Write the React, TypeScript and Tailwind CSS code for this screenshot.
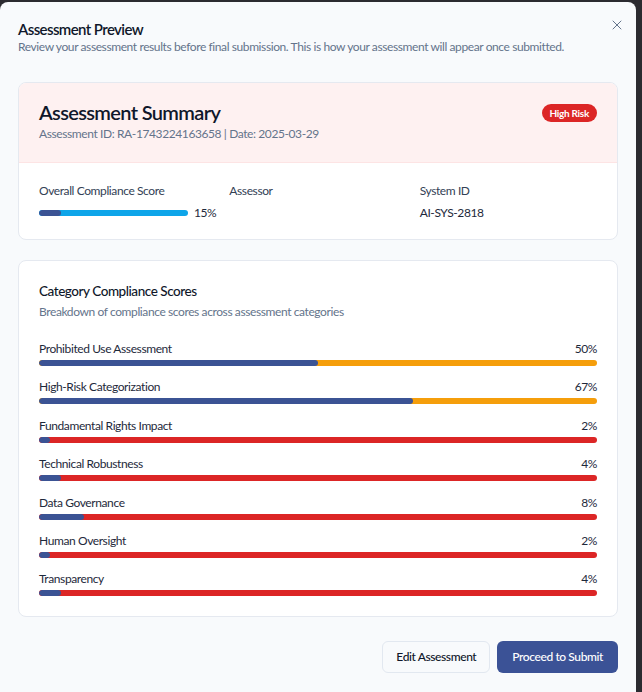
import React from "react";
import { X } from "lucide-react";

const cats = [
  { name: "Prohibited Use Assessment", v: 50 },
  { name: "High-Risk Categorization", v: 67 },
  { name: "Fundamental Rights Impact", v: 2 },
  { name: "Technical Robustness", v: 4 },
  { name: "Data Governance", v: 8 },
  { name: "Human Oversight", v: 2 },
  { name: "Transparency", v: 4 },
];

export default function App() {
  return (
    <div
      className="h-[692px] w-[642px] overflow-hidden bg-[#2b2b30] pt-[2px] pr-[6px] tracking-[-0.025em]"
      style={{ fontFamily: 'Lato, "Noto Sans", sans-serif' }}
    >
      <div className="relative h-[700px] rounded-lg bg-[#f8fafc] px-[18px] pt-[17px]">
        <button className="absolute left-[609px] top-[15px] text-[#64748b]">
          <X size={16} strokeWidth={1.5} />
        </button>
        <h2 className="text-[15px] leading-5 font-semibold tracking-[-0.6px] text-[#0f172a]">Assessment Preview</h2>
        <p className="text-[12px] leading-4 text-[#64748b]">
          Review your assessment results before final submission. This is how your assessment will appear once submitted.
        </p>

        <div className="mt-[27px] overflow-hidden rounded-lg border border-[#e5e9f0] bg-white">
          <div className="flex items-start justify-between border-b border-[#fde4e4] bg-[#fef1f1] px-5 pt-[15px] pb-5">
            <div>
              <div className="text-[20px] leading-7 font-semibold tracking-[-0.65px] text-[#0f172a]">Assessment Summary</div>
              <div className="text-[12px] leading-4 text-[#64748b]">Assessment ID: RA-1743224163658 | Date: 2025-03-29</div>
            </div>
            <span className="mt-[6px] flex h-[18px] items-center rounded-full bg-[#dc2626] px-[8px] text-[10px] font-bold tracking-[-0.3px] text-white">
              High Risk
            </span>
          </div>
          <div className="grid grid-cols-3 gap-[13px] px-5 pt-5 pb-[18px]">
            <div>
              <div className="text-[12px] leading-4 text-[#334155]">Overall Compliance Score</div>
              <div className="mt-[6px] flex items-center gap-[6px]">
                <div className="h-[6px] flex-1 overflow-hidden rounded-full bg-[#0ea5e9]">
                  <div className="h-full rounded-full bg-[#3b5394]" style={{ width: "15%" }} />
                </div>
                <span className="text-[12px] leading-4 text-[#1e293b]">15%</span>
              </div>
            </div>
            <div>
              <div className="text-[12px] leading-4 text-[#334155]">Assessor</div>
            </div>
            <div>
              <div className="text-[12px] leading-4 text-[#334155]">System ID</div>
              <div className="mt-[6px] text-[12px] leading-4 text-[#1e293b]">AI-SYS-2818</div>
            </div>
          </div>
        </div>

        <div className="mt-5 rounded-lg border border-[#e5e9f0] bg-white px-5 pt-5 pb-5">
          <div className="text-[13.5px] leading-5 font-medium tracking-[-0.45px] text-[#0f172a]">Category Compliance Scores</div>
          <div className="mt-[3px] text-[12px] leading-4 text-[#64748b]">Breakdown of compliance scores across assessment categories</div>
          <div className="mt-[21px] flex flex-col gap-[13.4px]">
            {cats.map((c) => (
              <div key={c.name}>
                <div className="flex justify-between text-[12px] leading-4 text-[#1e293b]">
                  <span>{c.name}</span>
                  <span>{c.v}%</span>
                </div>
                <div
                  className={
                    "mt-[3px] h-[6px] overflow-hidden rounded-full " +
                    (c.v >= 50 ? "bg-[#f59e0b]" : "bg-[#dc2626]")
                  }
                >
                  <div className="h-full rounded-full bg-[#3b5394]" style={{ width: `${c.v}%` }} />
                </div>
              </div>
            ))}
          </div>
        </div>

        <div className="mt-[24px] flex justify-end gap-[7px]">
          <button className="h-8 rounded-md border border-[#e2e8f0] bg-[#f8fafc] px-[13px] text-[12px] font-medium text-[#0f172a]">
            Edit Assessment
          </button>
          <button className="h-8 rounded-md bg-[#3b5296] px-[15px] text-[12px] font-medium text-white">
            Proceed to Submit
          </button>
        </div>
      </div>
    </div>
  );
}
